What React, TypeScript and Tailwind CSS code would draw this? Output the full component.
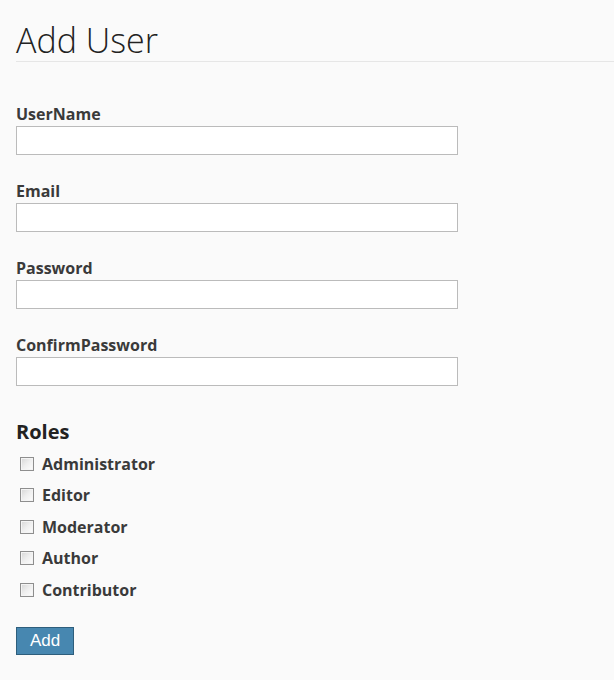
const roles = ["Administrator", "Editor", "Moderator", "Author", "Contributor"];

const fields = ["UserName", "Email", "Password", "ConfirmPassword"];

function CheckBox() {
  return (
    <span className="ml-[4px] mr-[8px] inline-block h-[14px] w-[14px] shrink-0 border border-[#8e8e8e] bg-gradient-to-br from-[#d6d6d6] via-[#efefef] to-[#fdfdfd] shadow-[inset_0_0_0_1px_#f4f4f4]" />
  );
}

export default function App() {
  return (
    <div
      className="min-h-[680px] w-full bg-[#fafafa] pl-4 text-[#333]"
      style={{ fontFamily: '"Open Sans", "Noto Sans", sans-serif' }}
    >
      <h1 className="border-b border-[#e6e6e6] pb-[1px] pt-[20px] text-[34px] font-light leading-[40px] text-[#222]">
        Add User
      </h1>

      <form className="pt-[40px]" onSubmit={(e) => e.preventDefault()}>
        {fields.map((f, i) => (
          <div key={f} className={i > 0 ? "mt-6" : ""}>
            <label className="block text-[16px] font-bold leading-[24px] text-[#3a3a3a]">{f}</label>
            <input
              type={f.includes("Password") ? "password" : "text"}
              className="block h-[29px] w-[442px] border border-[#bbbbbb] bg-white px-2 text-[14px] outline-none"
            />
          </div>
        ))}

        <h3 className="mt-[32px] text-[20px] font-bold leading-[28px] text-[#222]">Roles</h3>
        <div className="pt-[2px]">
          {roles.map((r) => (
            <label key={r} className="flex h-[31.5px] items-center text-[16px] font-bold text-[#3a3a3a]">
              <CheckBox />
              <span>{r}</span>
            </label>
          ))}
        </div>

        <button
          type="submit"
          className="mt-[21px] h-[28px] w-[58px] border border-[#2e5e7c] bg-[#4787b0] text-[17px] leading-none text-white"
          style={{ fontFamily: '"Liberation Sans", Arial, sans-serif' }}
        >
          Add
        </button>
      </form>
    </div>
  );
}
